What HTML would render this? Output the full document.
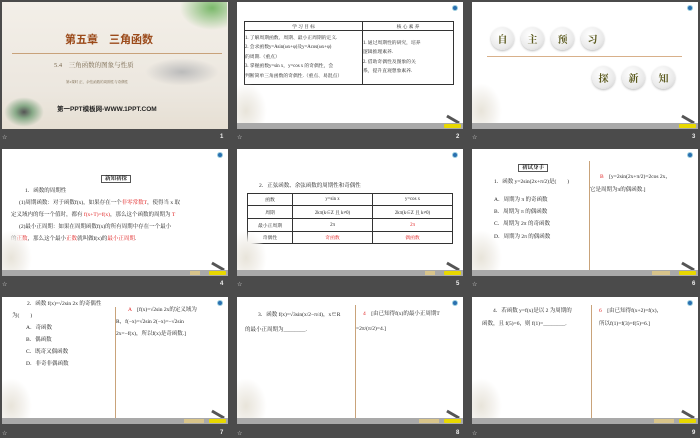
<!DOCTYPE html>
<html><head><meta charset="utf-8"><style>
*{margin:0;padding:0;box-sizing:border-box}
body{width:700px;height:438px;background:#4b4b4b;position:relative;overflow:hidden;font-family:"Liberation Serif","Noto Serif CJK SC","Noto Sans CJK SC",serif;color:#222}
.s{position:absolute;width:226px;height:127px;background:#fff;overflow:hidden}
.bar{position:absolute;left:0;right:0;bottom:0;height:6px;background:#a9a9a9}
.btn{position:absolute;bottom:1px;height:4px;width:17px;background:#e8d800;border-radius:1px}
.btn2{position:absolute;bottom:1px;height:4px;width:15px;background:#d8c48a}
.lab{position:absolute;color:#ddd;font-size:6px;font-family:"Liberation Sans",sans-serif}
.num{position:absolute;color:#eee;font-size:6px;font-weight:bold;font-family:"Liberation Sans",sans-serif}
.t{position:absolute;font-size:5.5px;line-height:8px;white-space:nowrap}
.r{color:#e02020}
.flw{position:absolute;left:0;bottom:6px;width:30px;height:40px;background:radial-gradient(ellipse at 30% 70%,#e8e4da 0,#f4f2ee 40%,rgba(255,255,255,0) 70%)}
.ic{position:absolute;right:5px;top:3px;width:6px;height:6px;border-radius:50%;background:#2a6fb0;border:1px solid #9cd}
.pen{position:absolute;right:3px;bottom:8px;width:14px;height:3px;background:#555;transform:rotate(30deg)}
.vl{position:absolute;top:12px;bottom:6px;width:1px;background:#c9a37a}
table{border-collapse:collapse;position:absolute}
td{border:0.6px solid #333;font-size:4.8px;text-align:center;height:9px}
.circ{position:absolute;width:23px;height:23px;border-radius:50%;background:radial-gradient(circle at 40% 35%,#fff,#e9e9e9 65%,#c8c8c8);font-size:10px;font-weight:bold;color:#5b5a1e;text-align:center;line-height:23px;font-family:"Noto Serif CJK SC",serif;box-shadow:0 1px 2px #bbb}
</style></head><body>

<!-- slide 1 -->
<div class="s" style="left:2px;top:2px;background:linear-gradient(#f3efe8,#ece7df 70%,#e6dfd3)">
  <div class="t" style="left:63px;top:30px;font-size:11px;line-height:14px;color:#9b4a1a;font-weight:bold;font-family:'Noto Sans CJK SC',sans-serif">第五章　三角函数</div>
  <div style="position:absolute;left:10px;top:51px;width:210px;height:1px;background:#c8a27a"></div>
  <div class="t" style="left:52px;top:60px;font-size:6.5px;color:#7a6a50">5.4　三角函数的图象与性质</div>
  <div class="t" style="left:64px;top:76px;font-size:3.5px;color:#7a6a50">第2课时 正、余弦函数的周期性与奇偶性</div>
  <div class="t" style="left:55px;top:104px;font-size:6.5px;color:#222;font-weight:bold;font-family:'Liberation Sans','Noto Sans CJK SC',sans-serif">第一PPT模板网-WWW.1PPT.COM</div>
  <div style="position:absolute;left:2px;top:95px;width:40px;height:30px;background:radial-gradient(ellipse,#555 0,#8a8 30%,rgba(255,255,255,0) 70%)"></div>
  <div style="position:absolute;left:175px;top:0;width:50px;height:30px;background:radial-gradient(ellipse at 70% 20%,#7ab86a 0,rgba(255,255,255,0) 65%)"></div>
  <div style="position:absolute;left:140px;top:55px;width:80px;height:30px;background:radial-gradient(ellipse,#bbb 0,rgba(255,255,255,0) 65%)"></div>
</div>
<div class="lab" style="left:2px;top:134px">☆</div><div class="num" style="left:220px;top:134px">1</div>

<!-- slide 2 -->
<div class="s" style="left:237px;top:2px">
  <table style="left:7px;top:19px;width:210px">
    <tr><td style="width:118px">学 习 目 标</td><td>核 心 素 养</td></tr>
    <tr><td style="text-align:left;height:54px;line-height:9.5px">1. 了解周期函数、周期、最小正周期的定义.<br>2. 会求函数y=Asin(ωx+φ)及y=Acos(ωx+φ)<br>的周期.（重点）<br>3. 掌握函数y=sin x，y=cos x 的奇偶性，会<br>判断简单三角函数的奇偶性.（重点、易混点）</td><td style="text-align:left;line-height:9.5px">1. 通过周期性的研究，培养<br>逻辑推理素养.<br>2. 借助奇偶性及图象的关<br>系，提升直观想象素养.</td></tr>
  </table>
  <div class="flw"></div><div class="ic"></div><div class="pen"></div>
  <div class="bar"></div><div class="btn" style="right:2px"></div>
</div>
<div class="lab" style="left:237px;top:134px">☆</div><div class="num" style="left:456px;top:134px">2</div>

<!-- slide 3 -->
<div class="s" style="left:472px;top:2px">
  <div class="circ" style="left:19px;top:25px">自</div>
  <div class="circ" style="left:49px;top:25px">主</div>
  <div class="circ" style="left:79px;top:25px">预</div>
  <div class="circ" style="left:109px;top:25px">习</div>
  <div style="position:absolute;left:15px;top:54px;width:195px;height:1px;background:#d8b08a"></div>
  <div class="circ" style="left:120px;top:64px">探</div>
  <div class="circ" style="left:150px;top:64px">新</div>
  <div class="circ" style="left:180px;top:64px">知</div>
  <div class="flw"></div><div class="ic"></div><div class="pen"></div>
  <div class="bar"></div><div class="btn" style="right:2px"></div>
</div>
<div class="lab" style="left:472px;top:134px">☆</div><div class="num" style="left:692px;top:134px">3</div>

<!-- slide 4 -->
<div class="s" style="left:2px;top:149px">
  <div class="t" style="left:99px;top:26px;border:0.6px solid #555;padding:0 3px;line-height:6px;font-weight:bold">新知初探</div>
  <div class="t" style="left:23px;top:38px">1．函数的周期性</div>
  <div class="t" style="left:17px;top:50px">(1)周期函数：对于函数f(x)，如果存在一个<span class="r">非零常数T</span>，使得当 x 取</div>
  <div class="t" style="left:9px;top:62px">定义域内的每一个值时，都有 <span class="r">f(x+T)=f(x)</span>，那么这个函数的周期为 <span class="r">T</span></div>
  <div class="t" style="left:17px;top:74px">(2)最小正周期：如果在周期函数f(x)的所有周期中存在一个最小</div>
  <div class="t" style="left:9px;top:86px">的<span class="r">正数</span>，那么这个最小<span class="r">正数</span>就叫做f(x)的<span class="r">最小正周期</span>.</div>
  <div class="flw"></div><div class="ic"></div><div class="pen"></div>
  <div class="bar"></div><div class="btn2" style="right:28px;width:10px"></div><div class="btn" style="right:2px"></div>
</div>
<div class="lab" style="left:2px;top:281px">☆</div><div class="num" style="left:220px;top:281px">4</div>

<!-- slide 5 -->
<div class="s" style="left:237px;top:149px">
  <div class="t" style="left:22px;top:33px">2．正弦函数、余弦函数的周期性和奇偶性</div>
  <table style="left:10px;top:44px;width:206px">
    <tr><td style="width:45px;height:12px">函数</td><td>y=sin x</td><td>y=cos x</td></tr>
    <tr><td style="height:13px">周期</td><td>2kπ(k∈Z 且 k≠0)</td><td>2kπ(k∈Z 且 k≠0)</td></tr>
    <tr><td style="height:13px">最小正周期</td><td>2π</td><td class="r">2π</td></tr>
    <tr><td style="height:12px">奇偶性</td><td class="r">奇函数</td><td class="r">偶函数</td></tr>
  </table>
  <div class="flw"></div><div class="ic"></div><div class="pen"></div>
  <div class="bar"></div><div class="btn2" style="right:28px;width:10px"></div><div class="btn" style="right:2px"></div>
</div>
<div class="lab" style="left:237px;top:281px">☆</div><div class="num" style="left:456px;top:281px">5</div>

<!-- slide 6 -->
<div class="s" style="left:472px;top:149px">
  <div class="t" style="left:46px;top:15px;border:0.6px solid #555;padding:0 3px;line-height:6px;font-weight:bold">初试身手</div>
  <div class="t" style="left:22px;top:29px">1．函数 y=2sin(2x+π/2)是(　　)</div>
  <div class="t" style="left:22px;top:47px">A．周期为 π 的奇函数</div>
  <div class="t" style="left:22px;top:59px">B．周期为 π 的偶函数</div>
  <div class="t" style="left:22px;top:71px">C．周期为 2π 的奇函数</div>
  <div class="t" style="left:22px;top:84px">D．周期为 2π 的偶函数</div>
  <div class="vl" style="left:117px"></div>
  <div class="t" style="left:128px;top:24px"><span class="r">B</span>　[y=2sin(2x+π/2)=2cos 2x，</div>
  <div class="t" style="left:118px;top:37px">它是周期为π的偶函数.]</div>
  <div class="flw"></div><div class="ic"></div><div class="pen"></div>
  <div class="bar"></div><div class="btn2" style="right:28px;width:18px"></div><div class="btn" style="right:2px"></div>
</div>
<div class="lab" style="left:472px;top:281px">☆</div><div class="num" style="left:692px;top:281px">6</div>

<!-- slide 7 -->
<div class="s" style="left:2px;top:297px">
  <div class="t" style="left:25px;top:3px">2．函数 f(x)=√2sin 2x 的奇偶性</div>
  <div class="t" style="left:10px;top:15px">为(　　)</div>
  <div class="t" style="left:24px;top:27px">A．奇函数</div>
  <div class="t" style="left:24px;top:39px">B．偶函数</div>
  <div class="t" style="left:24px;top:51px">C．既奇又偶函数</div>
  <div class="t" style="left:24px;top:63px">D．非奇非偶函数</div>
  <div class="vl" style="left:113px;top:10px"></div>
  <div class="t" style="left:126px;top:9px"><span class="r">A</span>　[f(x)=√2sin 2x的定义域为</div>
  <div class="t" style="left:114px;top:21px">R，f(−x)=√2sin 2(−x)=−√2sin</div>
  <div class="t" style="left:114px;top:33px">2x=−f(x)，所以f(x)是奇函数.]</div>
  <div class="flw"></div><div class="ic"></div><div class="pen"></div>
  <div class="bar"></div><div class="btn2" style="right:24px;width:20px"></div><div class="btn" style="right:2px"></div>
</div>
<div class="lab" style="left:2px;top:430px">☆</div><div class="num" style="left:220px;top:430px">7</div>

<!-- slide 8 -->
<div class="s" style="left:237px;top:297px">
  <div class="t" style="left:21px;top:14px">3．函数 f(x)=√3sin(x/2−π/4)，x∈R</div>
  <div class="t" style="left:8px;top:29px">的最小正周期为________.</div>
  <div class="vl" style="left:118px;top:8px"></div>
  <div class="t" style="left:126px;top:13px"><span class="r">4</span>　[由已知得f(x)的最小正周期T</div>
  <div class="t" style="left:119px;top:28px">=2π/(π/2)=4.]</div>
  <div class="flw"></div><div class="ic"></div><div class="pen"></div>
  <div class="bar"></div><div class="btn2" style="right:24px;width:20px"></div><div class="btn" style="right:2px"></div>
</div>
<div class="lab" style="left:237px;top:430px">☆</div><div class="num" style="left:456px;top:430px">8</div>

<!-- slide 9 -->
<div class="s" style="left:472px;top:297px">
  <div class="t" style="left:21px;top:10px">4．若函数 y=f(x)是以 2 为周期的</div>
  <div class="t" style="left:10px;top:23px">函数，且 f(5)=6，则 f(1)=________.</div>
  <div class="vl" style="left:119px;top:8px"></div>
  <div class="t" style="left:127px;top:10px"><span class="r">6</span>　[由已知得f(x+2)=f(x)，</div>
  <div class="t" style="left:127px;top:23px">所以f(1)=f(3)=f(5)=6.]</div>
  <div class="flw"></div><div class="ic"></div><div class="pen"></div>
  <div class="bar"></div><div class="btn2" style="right:24px;width:20px"></div><div class="btn" style="right:2px"></div>
</div>
<div class="lab" style="left:472px;top:430px">☆</div><div class="num" style="left:692px;top:430px">9</div>

</body></html>
